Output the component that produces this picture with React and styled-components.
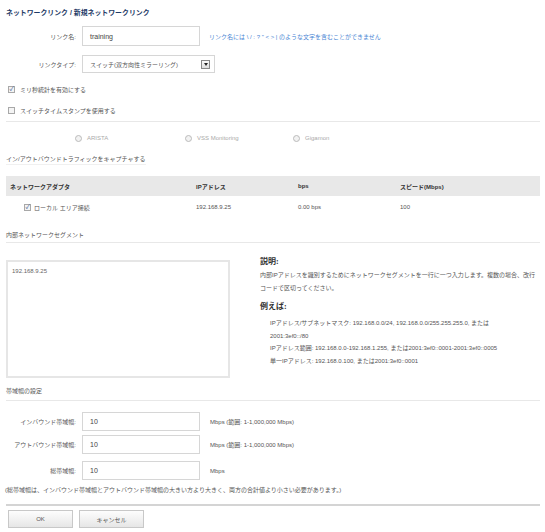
import React from 'react';
import styled, { createGlobalStyle, css } from 'styled-components';

const GlobalStyle = createGlobalStyle`
    html, body {
        margin: 0;
        padding: 0;
        background: #fff;
    }
    body {
        font-family: "Liberation Sans", "Noto Sans CJK JP", sans-serif;
        font-size: 6px;
        color: #555;
    }
`;

const Page = styled.div`
    width: 545px;
    height: 532px;
    box-sizing: border-box;
    padding: 0 5px 0 6px;
    overflow: hidden;
`;

const Title = styled.h1`
    margin: 0;
    padding-top: 7px;
    height: 19px;
    box-sizing: border-box;
    font-size: 6.9px;
    font-weight: bold;
    color: #1e3a66;
`;

const FormRow = styled.div`
    display: flex;
    align-items: center;
    height: ${props => props.h || 20}px;
    margin-top: ${props => props.mt || 0}px;
`;

const Label = styled.label`
    width: 70px;
    text-align: right;
    padding-right: 6px;
    color: #555;
`;

const TextInput = styled.div`
    width: 118px;
    height: ${props => props.h || 20}px;
    box-sizing: border-box;
    border: 1px solid #d6d6d6;
    padding-left: 7px;
    display: flex;
    align-items: center;
    font-size: 7px;
    color: #444;
`;

const Hint = styled.span`
    margin-left: 9px;
    color: #4a86d4;
`;

const Unit = styled.span`
    margin-left: 10px;
    color: #555;
`;

const Select = styled.div`
    width: 133px;
    height: 18px;
    box-sizing: border-box;
    border: 1px solid #d6d6d6;
    padding: 0 4px 0 7px;
    display: flex;
    align-items: center;
    justify-content: space-between;
    color: #555;
`;

const SelectArrow = styled.span`
    width: 9px;
    height: 9px;
    box-sizing: border-box;
    border: 1px solid #888;
    background: linear-gradient(#fafafa, #ddd);
    display: flex;
    align-items: center;
    justify-content: center;
    &::after {
        content: '';
        border-left: 2.5px solid transparent;
        border-right: 2.5px solid transparent;
        border-top: 3px solid #222;
    }
`;

const CheckRow = styled.div`
    display: flex;
    align-items: center;
    gap: 5px;
    height: ${props => props.h || 21}px;
    padding-left: 2px;
`;

const Box = styled.span`
    width: 7px;
    height: 7px;
    box-sizing: border-box;
    border: 1px solid #a8a8a8;
    background: #f4f4f4;
    display: inline-flex;
    align-items: center;
    justify-content: center;
    font-size: 6px;
    line-height: 1;
    color: #2a4c8a;
    ${props => props.checked && css`
        &::after {
            content: '✓';
        }
    `}
`;

const Divider = styled.div`
    height: ${props => props.thick ? 2 : 1}px;
    background: ${props => props.faint ? '#f0f0f0' : props.thick ? '#d4d4d4' : '#e8e8e8'};
    width: ${props => props.w || 'auto'};
    margin-top: ${props => props.mt || 0}px;
`;

const RadioRow = styled.div`
    display: flex;
    align-items: center;
    height: 32px;
    padding-left: 69px;
    color: #aaa;
`;

const Radio = styled.span`
    display: flex;
    align-items: center;
    gap: 5px;
    width: ${props => props.w}px;
    &::before {
        content: '';
        width: 5px;
        height: 5px;
        border-radius: 50%;
        border: 1px solid #bbb;
        background: #f2f2f2;
    }
`;

const SectionLabel = styled.div`
    height: ${props => props.h || 10}px;
    margin-top: ${props => props.mt || 0}px;
    display: flex;
    align-items: center;
    color: #555;
`;

const Table = styled.div`
    margin-top: 11px;
`;

const TableRow = styled.div`
    display: grid;
    grid-template-columns: 186px 102px 102px 1fr;
    align-items: center;
    height: ${props => props.header ? 20 : 22}px;
    background: ${props => props.header ? '#e8e8e8' : 'transparent'};
    font-weight: ${props => props.header ? 'bold' : 'normal'};
    color: ${props => props.header ? '#333' : '#555'};
`;

const Cell = styled.div`
    padding-left: 4px;
    display: flex;
    align-items: center;
    gap: 3px;
`;

const AdapterCell = styled(Cell)`
    padding-left: 18px;
`;

const SegmentArea = styled.div`
    display: flex;
    margin-top: 17px;
`;

const TextArea = styled.div`
    width: 224px;
    height: 118px;
    box-sizing: border-box;
    border: 2px solid #e6e6e6;
    padding: 6px 4px;
    color: #666;
    flex-shrink: 0;
`;

const Help = styled.div`
    margin-left: 30px;
    margin-top: -7px;
    flex: 1;
    color: #555;
`;

const HelpTitle = styled.div`
    font-family: "Liberation Serif", "Noto Sans CJK JP", serif;
    font-weight: bold;
    font-size: 8px;
    color: #333;
    height: 14px;
    display: flex;
    align-items: center;
`;

const HelpText = styled.p`
    margin: 2px 0 3px;
    line-height: 13px;
`;

const Examples = styled.div`
    padding-left: 10px;
    margin-top: 5px;
    line-height: 12.7px;
`;

const Note = styled.div`
    height: 13px;
    margin-top: 3px;
    display: flex;
    align-items: center;
    margin-left: -1px;
    color: #555;
`;

const ButtonBar = styled.div`
    display: flex;
    gap: 6px;
    padding-left: 2px;
    margin-top: 4px;
`;

const Button = styled.button`
    width: 65px;
    height: 18px;
    border: 1px solid #c8c8c8;
    background: linear-gradient(#fdfdfd, #e6e6e6);
    font-family: inherit;
    font-size: 6px;
    color: #555;
    padding: 0;
`;

const examples = [
    'IPアドレス/サブネットマスク: 192.168.0.0/24, 192.168.0.0/255.255.255.0, または',
    '2001:3ef0::/80',
    'IPアドレス範囲: 192.168.0.0-192.168.1.255, または2001:3ef0::0001-2001:3ef0::0005',
    '単一IPアドレス: 192.168.0.100, または2001:3ef0::0001',
];

const bandwidth = [
    { label: 'インバウンド帯域幅:', unit: 'Mbps (範囲: 1-1,000,000 Mbps)', mt: 11 },
    { label: 'アウトバウンド帯域幅:', unit: 'Mbps (範囲: 1-1,000,000 Mbps)', mt: 4 },
    { label: '総帯域幅:', unit: 'Mbps', mt: 7 },
];

export default function App() {
    return (
        <Page>
            <GlobalStyle />
            <Title>ネットワークリンク / 新規ネットワークリンク</Title>

            <FormRow mt={7}>
                <Label>リンク名:</Label>
                <TextInput>training</TextInput>
                <Hint>リンク名には \ / : ? " &lt; &gt; | のような文字を含むことができません</Hint>
            </FormRow>
            <FormRow mt={9} h={18}>
                <Label>リンクタイプ:</Label>
                <Select>
                    <span>スイッチ(双方向性ミラーリング)</span>
                    <SelectArrow />
                </Select>
            </FormRow>

            <CheckRow h={22} style={{ marginTop: 5 }}>
                <Box checked />
                <span>ミリ秒統計を有効にする</span>
            </CheckRow>
            <CheckRow h={21}>
                <Box />
                <span>スイッチタイムスタンプを使用する</span>
            </CheckRow>
            <Divider />

            <RadioRow>
                <Radio w={110}>ARISTA</Radio>
                <Radio w={108}>VSS Monitoring</Radio>
                <Radio>Gigamon</Radio>
            </RadioRow>

            <SectionLabel h={8}>イン/アウトバウンドトラフィックをキャプチャする</SectionLabel>
            <Divider faint w="140px" mt={2} />

            <Table>
                <TableRow header>
                    <Cell>ネットワークアダプタ</Cell>
                    <Cell>IPアドレス</Cell>
                    <Cell>bps</Cell>
                    <Cell>スピード(Mbps)</Cell>
                </TableRow>
                <TableRow>
                    <AdapterCell><Box checked />ローカル エリア接続</AdapterCell>
                    <Cell>192.168.9.25</Cell>
                    <Cell>0.00 bps</Cell>
                    <Cell>100</Cell>
                </TableRow>
            </Table>

            <SectionLabel h={15} mt={9}>内部ネットワークセグメント</SectionLabel>
            <Divider />

            <SegmentArea>
                <TextArea>192.168.9.25</TextArea>
                <Help>
                    <HelpTitle>説明:</HelpTitle>
                    <HelpText>
                        内部IPアドレスを識別するためにネットワークセグメントを一行に一つ入力します。複数の場合、改行コードで区切ってください。
                    </HelpText>
                    <HelpTitle>例えば:</HelpTitle>
                    <Examples>
                        {examples.map(line => <div key={line}>{line}</div>)}
                    </Examples>
                </Help>
            </SegmentArea>

            <SectionLabel h={20} mt={2}>帯域幅の設定</SectionLabel>
            <Divider />

            {bandwidth.map(row => (
                <FormRow key={row.label} mt={row.mt} h={19}>
                    <Label>{row.label}</Label>
                    <TextInput h={19}>10</TextInput>
                    <Unit>{row.unit}</Unit>
                </FormRow>
            ))}

            <Note>
                (総帯域幅は、インバウンド帯域幅とアウトバウンド帯域幅の大きい方より大きく、両方の合計値より小さい必要があります。)
            </Note>
            <Divider thick mt={8} />

            <ButtonBar>
                <Button>OK</Button>
                <Button>キャンセル</Button>
            </ButtonBar>
        </Page>
    );
}
